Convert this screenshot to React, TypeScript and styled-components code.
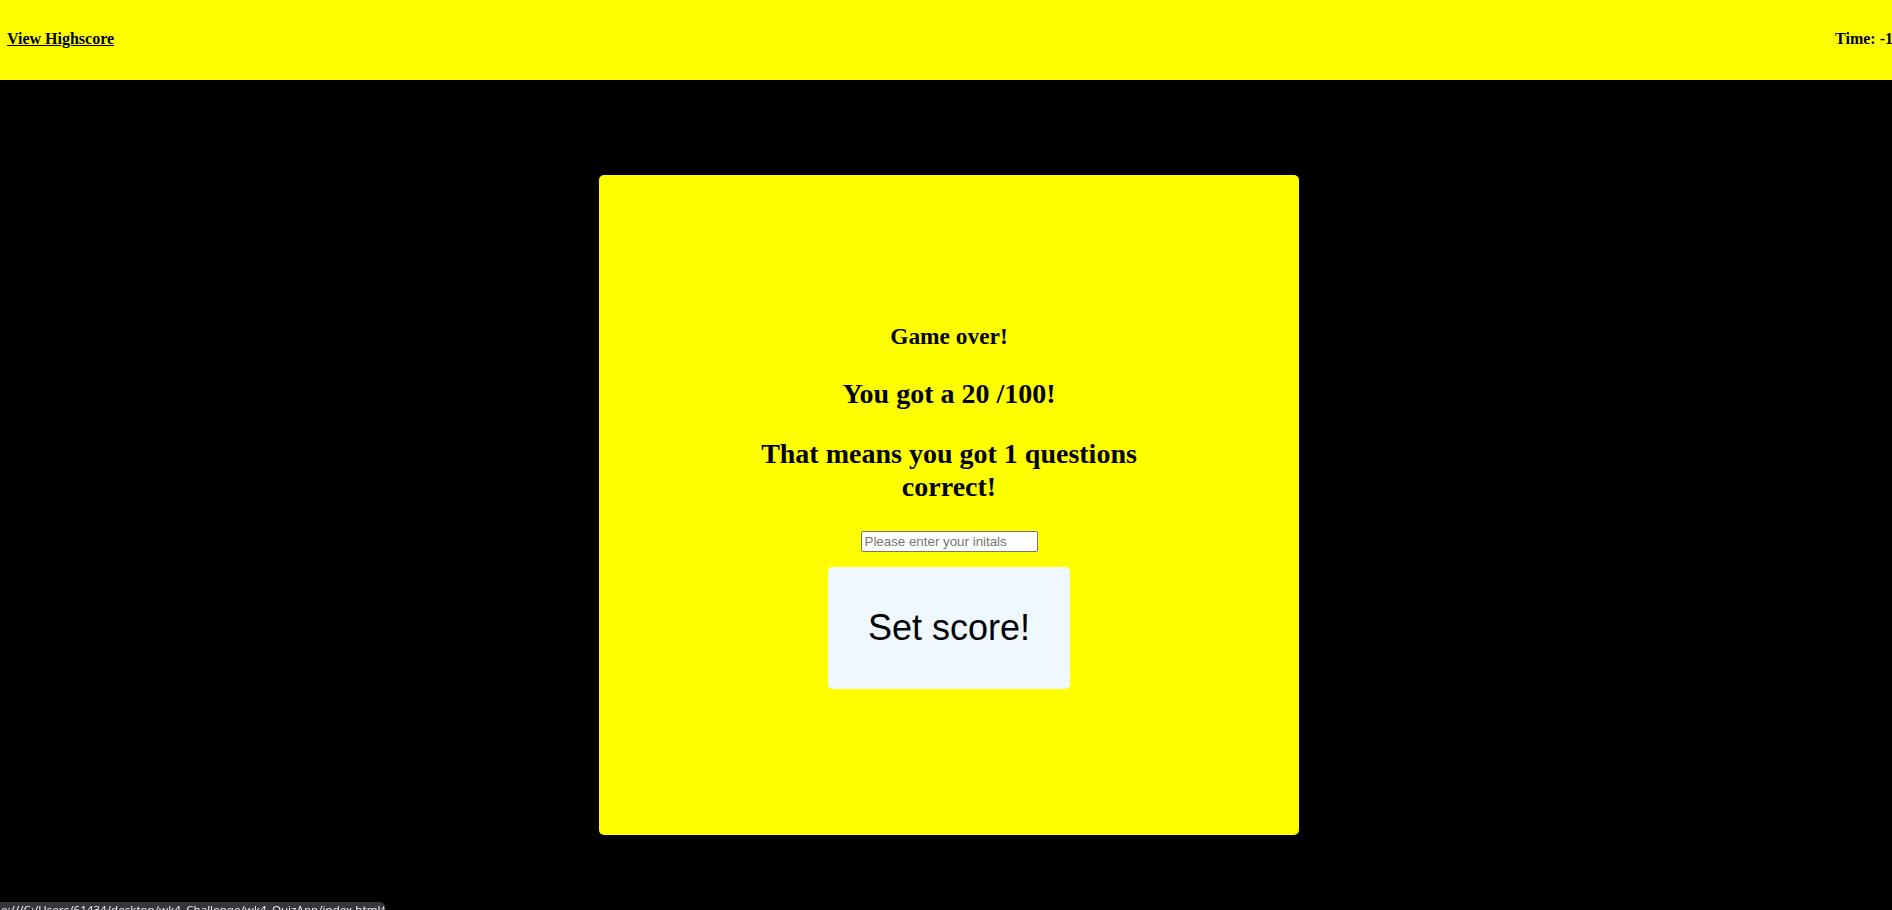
import React from "react";
import styled, { createGlobalStyle } from "styled-components";

const GlobalStyle = createGlobalStyle`
  html, body {
    margin: 0;
    padding: 0;
    background: #000000;
    overflow: hidden;
  }
  body {
    font-family: "Liberation Serif", "Times New Roman", serif;
    color: #000000;
  }
`;

const Page = styled.div`
  width: 1892px;
  height: 910px;
  background: #000000;
  display: flex;
  flex-direction: column;
`;

const Header = styled.header`
  height: 80px;
  background: #ffff00;
  display: flex;
  align-items: center;
  justify-content: space-between;
  padding: 0 0 3px 7px;
  box-sizing: border-box;
  font-size: 16px;
  font-weight: bold;
  line-height: 1;
`;

const HighscoreLink = styled.a`
  color: #000000;
  text-decoration: underline;
  cursor: pointer;
`;

const Timer = styled.span`
  margin-right: -1px;
  white-space: nowrap;
`;

const Stage = styled.div`
  display: flex;
  justify-content: center;
  padding: 95px 0 0 6px;
`;

const Card = styled.main`
  width: 700px;
  height: 660px;
  background: #ffff00;
  border-radius: 5px;
  display: flex;
  flex-direction: column;
  align-items: center;
  justify-content: center;
  box-sizing: border-box;
  padding-top: 2px;
`;

const Title = styled.h2`
  margin: 0 0 28px;
  font-size: 23.4px;
  font-weight: bold;
  line-height: 1.15;
  text-align: center;
`;

const Result = styled.h1<{ $wrap?: boolean }>`
  margin: 0 0 28px;
  font-size: 28px;
  font-weight: bold;
  line-height: 1.15;
  text-align: center;
  width: ${(p) => (p.$wrap ? "400px" : "auto")};
`;

const InitialsInput = styled.input`
  box-sizing: border-box;
  width: 177px;
  height: 21px;
  margin: 0 0 15px;
  padding: 1px 3px;
  border: 1px solid #767676;
  border-radius: 2px;
  background: #ffffff;
  font-family: "Liberation Sans", Arial, sans-serif;
  font-size: 13.333px;
  color: #000000;
  outline: none;
  &::placeholder {
    color: #757575;
  }
`;

const SetButton = styled.button`
  width: 242px;
  height: 122px;
  border: none;
  border-radius: 5px;
  background: #f0f8ff;
  color: #000000;
  font-family: "Liberation Sans", Arial, sans-serif;
  font-size: 36px;
  cursor: pointer;
  padding: 0;
`;

const StatusBar = styled.div`
  position: fixed;
  left: 0;
  bottom: 0;
  width: 385px;
  height: 8px;
  background: #35363a;
  border-top-right-radius: 5px;
  overflow: hidden;
  color: #e8eaed;
  font-family: "Noto Sans", "DejaVu Sans", sans-serif;
  font-size: 11.6px;
  line-height: 14px;
  white-space: nowrap;
`;

const StatusText = styled.span`
  display: block;
  margin-left: -9px;
  padding-top: 1px;
`;

export default function App() {
  return (
    <>
      <GlobalStyle />
      <Page>
        <Header>
          <HighscoreLink href="#">View Highscore</HighscoreLink>
          <Timer>Time: -1</Timer>
        </Header>
        <Stage>
          <Card>
            <Title>Game over!</Title>
            <Result>You got a 20 /100!</Result>
            <Result $wrap>That means you got 1 questions correct!</Result>
            <InitialsInput type="text" placeholder="Please enter your initals" />
            <SetButton type="button">Set score!</SetButton>
          </Card>
        </Stage>
      </Page>
      <StatusBar>
        <StatusText>file:///C:/Users/61434/desktop/wk4_Challenge/wk4_QuizApp/index.html#</StatusText>
      </StatusBar>
    </>
  );
}
